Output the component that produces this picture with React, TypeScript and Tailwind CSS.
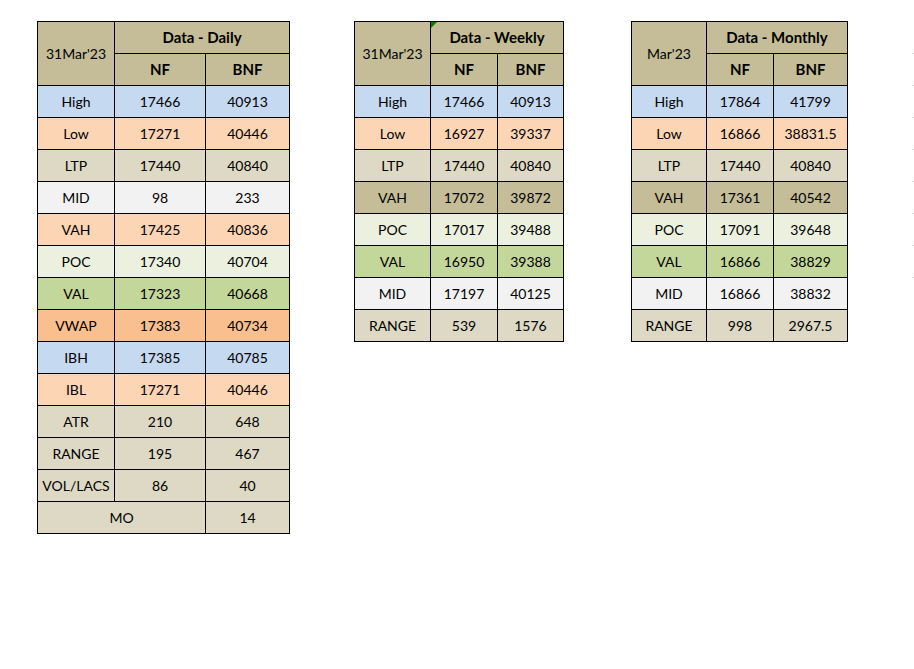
const HEAD = "bg-[#C4BD97]";
const BLUE = "bg-[#C5D9F1]";
const PEACH = "bg-[#FCD5B4]";
const TAN = "bg-[#DDD9C4]";
const GREY = "bg-[#F2F2F2]";
const PALE = "bg-[#EBF1DE]";
const GREEN = "bg-[#C4D79B]";
const ORANGE = "bg-[#FABF8F]";

type Row = { label: string; nf: string; bnf: string; bg: string };

const daily: Row[] = [
  { label: "High", nf: "17466", bnf: "40913", bg: BLUE },
  { label: "Low", nf: "17271", bnf: "40446", bg: PEACH },
  { label: "LTP", nf: "17440", bnf: "40840", bg: TAN },
  { label: "MID", nf: "98", bnf: "233", bg: GREY },
  { label: "VAH", nf: "17425", bnf: "40836", bg: PEACH },
  { label: "POC", nf: "17340", bnf: "40704", bg: PALE },
  { label: "VAL", nf: "17323", bnf: "40668", bg: GREEN },
  { label: "VWAP", nf: "17383", bnf: "40734", bg: ORANGE },
  { label: "IBH", nf: "17385", bnf: "40785", bg: BLUE },
  { label: "IBL", nf: "17271", bnf: "40446", bg: PEACH },
  { label: "ATR", nf: "210", bnf: "648", bg: TAN },
  { label: "RANGE", nf: "195", bnf: "467", bg: TAN },
  { label: "VOL/LACS", nf: "86", bnf: "40", bg: TAN },
];

const weekly: Row[] = [
  { label: "High", nf: "17466", bnf: "40913", bg: BLUE },
  { label: "Low", nf: "16927", bnf: "39337", bg: PEACH },
  { label: "LTP", nf: "17440", bnf: "40840", bg: TAN },
  { label: "VAH", nf: "17072", bnf: "39872", bg: HEAD },
  { label: "POC", nf: "17017", bnf: "39488", bg: PALE },
  { label: "VAL", nf: "16950", bnf: "39388", bg: GREEN },
  { label: "MID", nf: "17197", bnf: "40125", bg: GREY },
  { label: "RANGE", nf: "539", bnf: "1576", bg: TAN },
];

const monthly: Row[] = [
  { label: "High", nf: "17864", bnf: "41799", bg: BLUE },
  { label: "Low", nf: "16866", bnf: "38831.5", bg: PEACH },
  { label: "LTP", nf: "17440", bnf: "40840", bg: TAN },
  { label: "VAH", nf: "17361", bnf: "40542", bg: HEAD },
  { label: "POC", nf: "17091", bnf: "39648", bg: PALE },
  { label: "VAL", nf: "16866", bnf: "38829", bg: GREEN },
  { label: "MID", nf: "16866", bnf: "38832", bg: GREY },
  { label: "RANGE", nf: "998", bnf: "2967.5", bg: TAN },
];

function Cell({ bg, className = "", children }: { bg: string; className?: string; children?: React.ReactNode }) {
  return <div className={`flex items-center justify-center ${bg} ${className}`}>{children}</div>;
}

function Sheet({
  date,
  title,
  rows,
  cols,
  marker = false,
  footer,
}: {
  date: string;
  title: string;
  rows: Row[];
  cols: string;
  marker?: boolean;
  footer?: React.ReactNode;
}) {
  return (
    <div className={`grid ${cols} auto-rows-[31px] gap-px border border-black bg-black`}>
      <Cell bg={HEAD} className="row-span-2">
        {date}
      </Cell>
      <Cell bg={HEAD} className="relative col-span-2 text-[15px] font-bold">
        {marker ? (
          <span className="absolute left-0 top-0 h-0 w-0 border-r-[6px] border-t-[6px] border-r-transparent border-t-[#008000]" />
        ) : null}
        {title}
      </Cell>
      <Cell bg={HEAD} className="text-[15px] font-bold">
        NF
      </Cell>
      <Cell bg={HEAD} className="text-[15px] font-bold">
        BNF
      </Cell>
      {rows.map((r) => (
        <div key={r.label} className="contents">
          <Cell bg={r.bg}>{r.label}</Cell>
          <Cell bg={r.bg}>{r.nf}</Cell>
          <Cell bg={r.bg}>{r.bnf}</Cell>
        </div>
      ))}
      {footer}
    </div>
  );
}

export default function App() {
  return (
    <div className="flex h-[669px] w-[914px] items-start overflow-hidden bg-white pl-[37px] pt-[21px] font-['Lato',sans-serif] text-[14px] text-black">
      <Sheet
        date="31Mar'23"
        title="Data - Daily"
        rows={daily}
        cols="grid-cols-[76px_90px_83px]"
        footer={
          <>
            <Cell bg={TAN} className="col-span-2">
              MO
            </Cell>
            <Cell bg={TAN}>14</Cell>
          </>
        }
      />
      <div className="ml-[64px]">
        <Sheet date="31Mar'23" title="Data - Weekly" rows={weekly} cols="grid-cols-[75px_66px_65px]" marker />
      </div>
      <div className="ml-[67px]">
        <Sheet date="Mar'23" title="Data - Monthly" rows={monthly} cols="grid-cols-[74px_66px_73px]" />
      </div>
      <div className="ml-auto flex flex-col gap-[31px] pt-[32px]">
        {Array.from({ length: 8 }).map((_, i) => (
          <span key={i} className="block h-px w-px bg-[#b0b0b0]" />
        ))}
      </div>
    </div>
  );
}
